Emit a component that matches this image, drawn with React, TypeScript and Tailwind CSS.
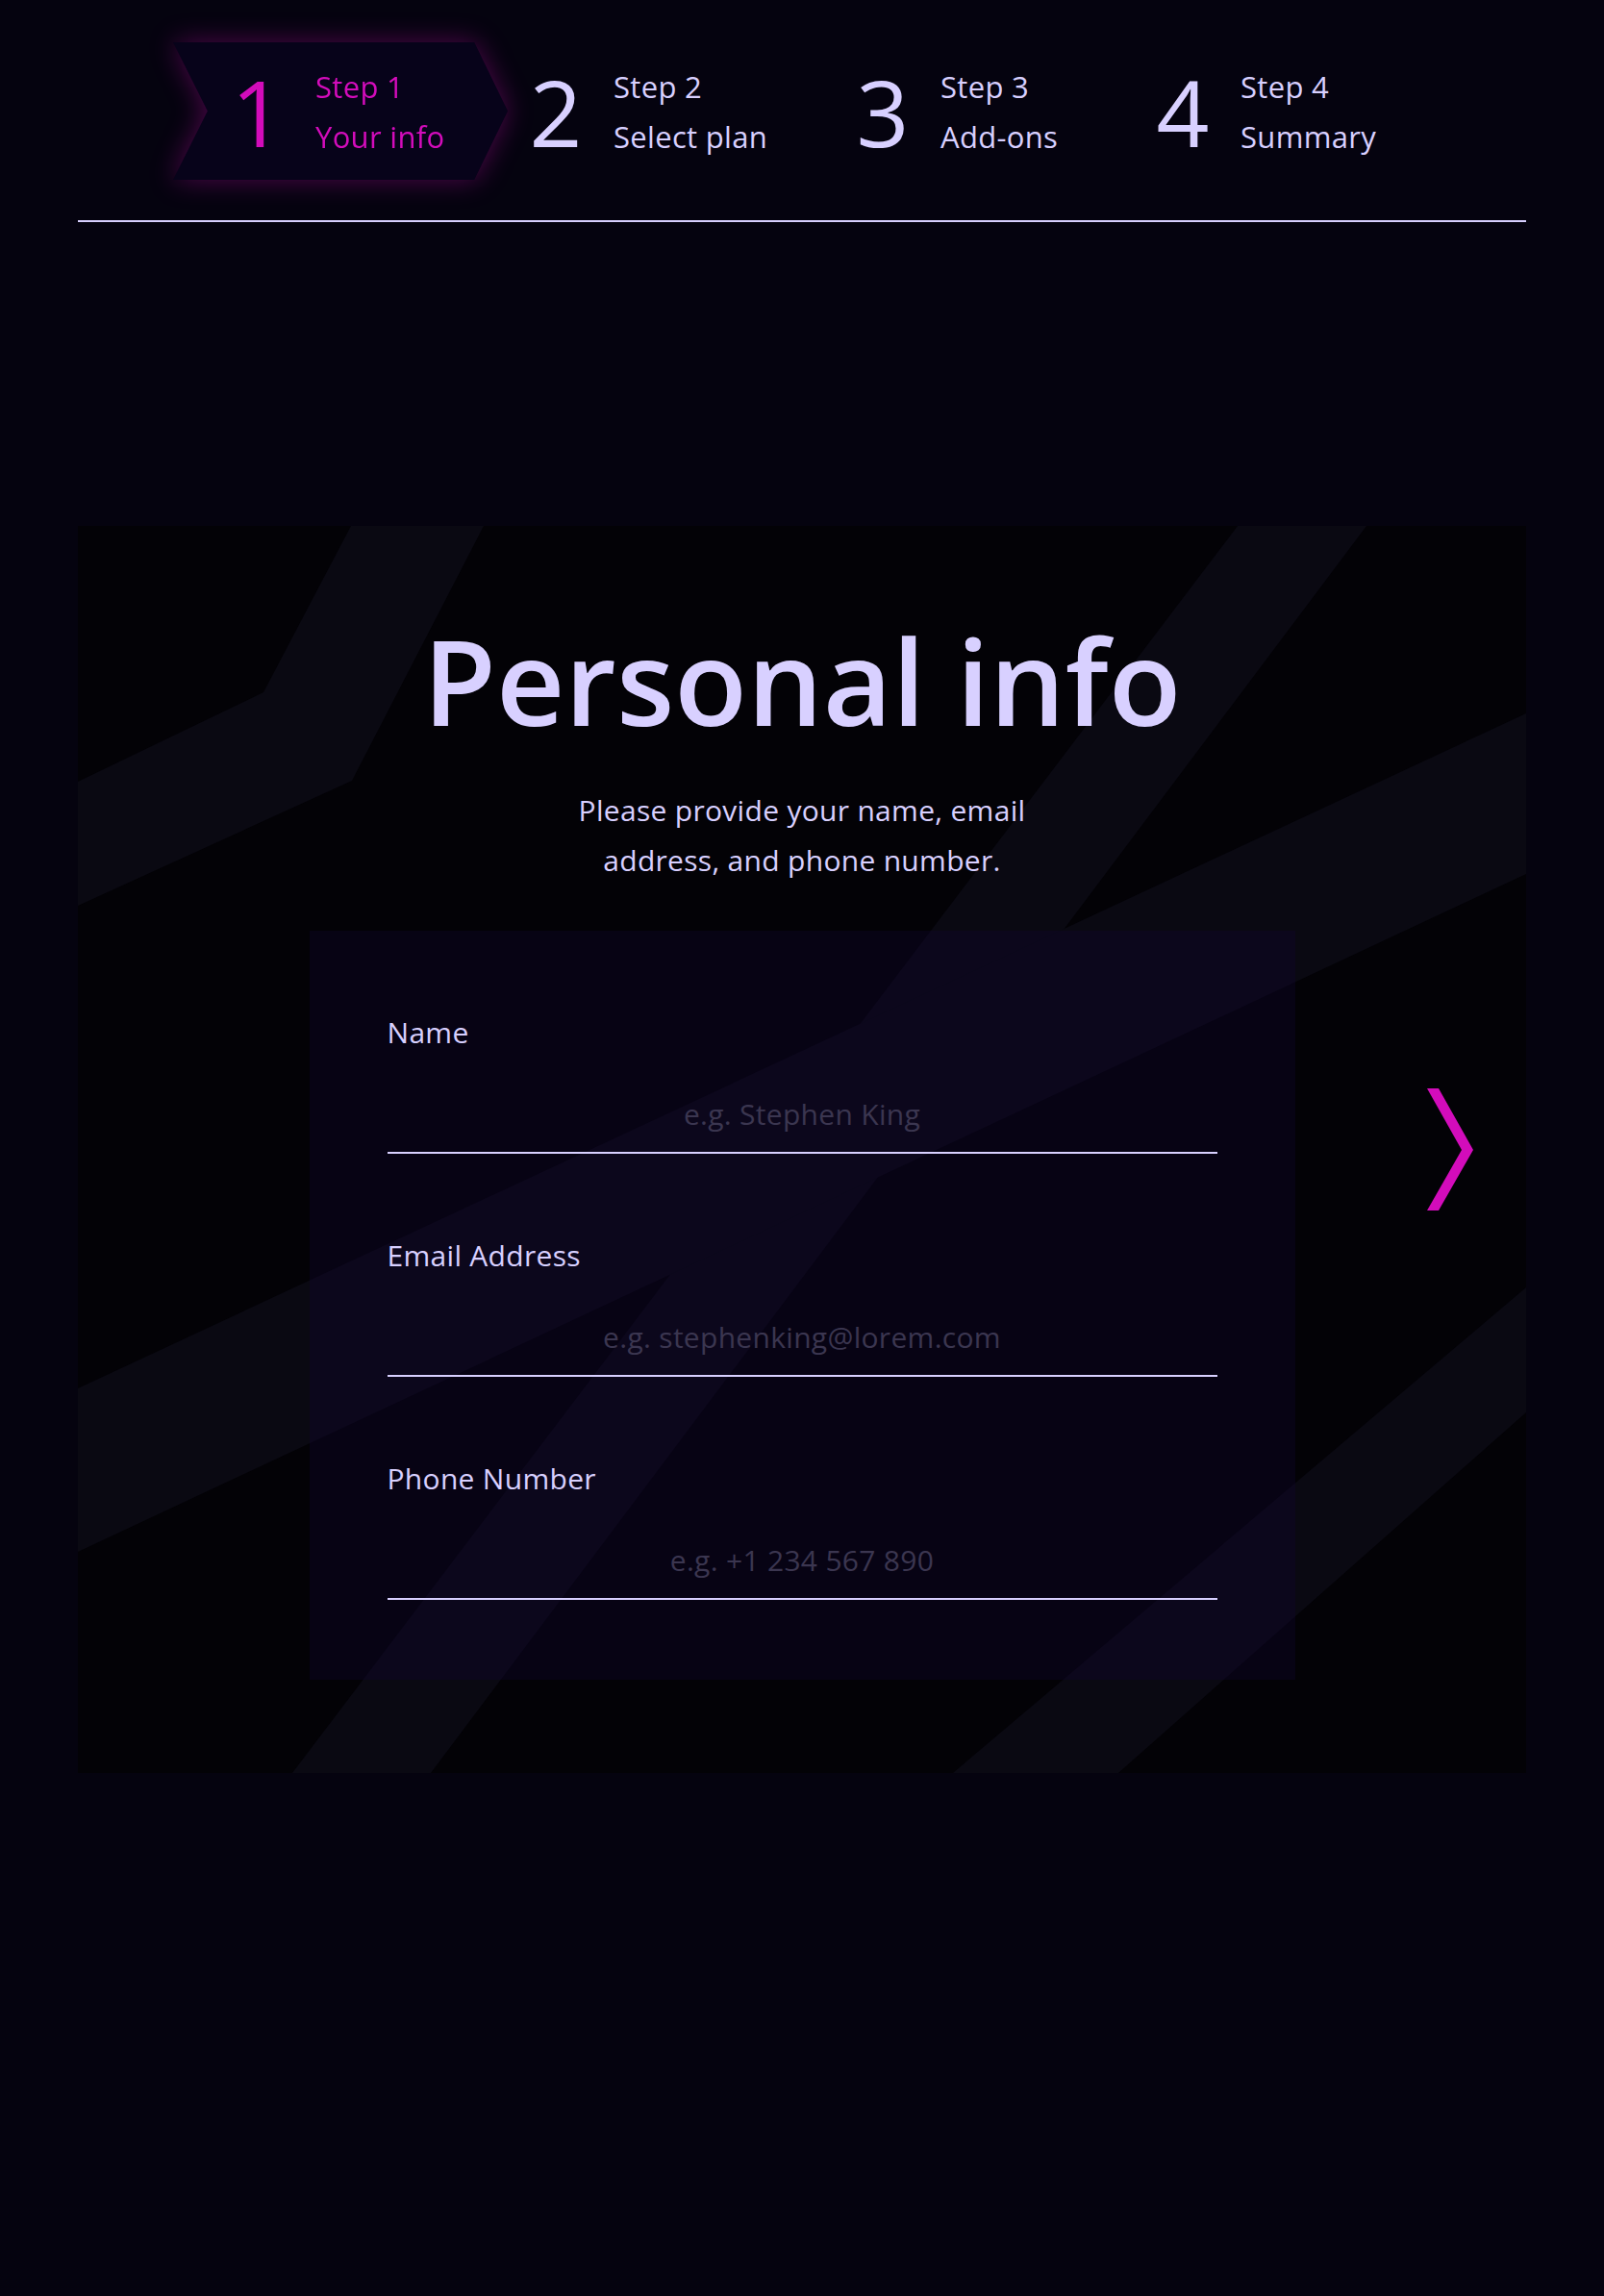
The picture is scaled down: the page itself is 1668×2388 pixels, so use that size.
import React from 'react';

const steps = [
  { n: 1, label: 'Your info', width: 'w-[348px]' },
  { n: 2, label: 'Select plan', width: 'ml-[22px] w-[340px]' },
  { n: 3, label: 'Add-ons', width: 'w-[312px]' },
  { n: 4, label: 'Summary', width: '' },
];

const fields = [
  { label: 'Name', placeholder: 'e.g. Stephen King', type: 'text' },
  { label: 'Email Address', placeholder: 'e.g. stephenking@lorem.com', type: 'email' },
  { label: 'Phone Number', placeholder: 'e.g. +1 234 567 890', type: 'tel' },
];

const StepContent: React.FC<{ n: number; label: string }> = ({ n, label }) => (
  <div className="flex items-center gap-8">
    <span className="w-14 text-center text-[96px] font-normal leading-none">{n}</span>
    <div className="text-[31px] leading-[52px] tracking-[0.01em]">
      <div>Step {n}</div>
      <div>{label}</div>
    </div>
  </div>
);

const StepNav: React.FC = () => (
  <nav className="flex items-center border-b-2 border-[#d8d0ff] pb-[42px] pl-[99px] pt-[44px]">
    {steps.map((s) =>
      s.n === 1 ? (
        <div key={s.n} className={`${s.width} drop-shadow-[0_0_14px_rgba(211,12,187,0.35)]`}>
          <div className="flex h-[143px] items-center bg-[#07031a] pl-[60px] text-[#d30cbb] [clip-path:polygon(0_0,90%_0,100%_50%,90%_100%,0_100%,10.3%_50%)]">
            <StepContent n={s.n} label={s.label} />
          </div>
        </div>
      ) : (
        <div key={s.n} className={`${s.width} flex h-[143px] items-center text-[#d8d0ff]`}>
          <StepContent n={s.n} label={s.label} />
        </div>
      )
    )}
  </nav>
);

const Stripes: React.FC = () => (
  <svg
    className="absolute inset-0 h-full w-full"
    viewBox="0 0 1506 1297"
    preserveAspectRatio="none"
    fill="#0a0912"
  >
    <polygon points="284,0 422,0 285,265 0,395 0,266 193,173" />
    <polygon points="1206,0 1340,0 367,1297 223,1297" />
    <polygon points="1506,195 1506,362 0,1067 0,897" />
    <polygon points="1506,792 1506,922 1082,1297 910,1297" />
  </svg>
);

const NextArrow: React.FC = () => (
  <button className="mr-[55px]" aria-label="Next step">
    <svg width="48" height="127" viewBox="0 0 48 127" fill="#d30cbb">
      <polygon points="0,0 12,0 48,64 12,127 0,127 36,64" />
    </svg>
  </button>
);

export default function App() {
  return (
    <div className="min-h-screen bg-[#05030f] px-[81px] text-[#d8d0ff] [font-family:'Open_Sans','Noto_Sans',sans-serif]">
      <StepNav />

      <main className="relative mt-[316px] grid grid-cols-[1fr_1025px_1fr] overflow-hidden bg-[#030206]">
        <Stripes />
        <div />
        <div className="relative flex flex-col items-center pb-[97px] pt-[98px]">
          <h1 className="text-[124px] font-semibold leading-none">Personal info</h1>
          <p className="mt-[48px] text-center text-[30px] leading-[52px] tracking-[0.01em]">
            Please provide your name, email
            <br />
            address, and phone number.
          </p>

          <form className="mt-[47px] flex w-full flex-col gap-[86px] bg-[rgba(16,5,46,0.36)] px-[81px] pb-[83px] pt-[86px]">
            {fields.map((f) => (
              <label key={f.label} className="flex flex-col">
                <span className="text-[30px] leading-[40px] tracking-[0.01em]">{f.label}</span>
                <input
                  type={f.type}
                  placeholder={f.placeholder}
                  className="h-[106px] border-b-2 border-[#d8d0ff] bg-transparent pb-[23px] pt-[47px] text-center text-[30px] tracking-[0.01em] text-[#d8d0ff] outline-none placeholder:text-[#3b3650]"
                />
              </label>
            ))}
          </form>
        </div>
        <div className="relative flex items-center justify-end">
          <NextArrow />
        </div>
      </main>
    </div>
  );
}
